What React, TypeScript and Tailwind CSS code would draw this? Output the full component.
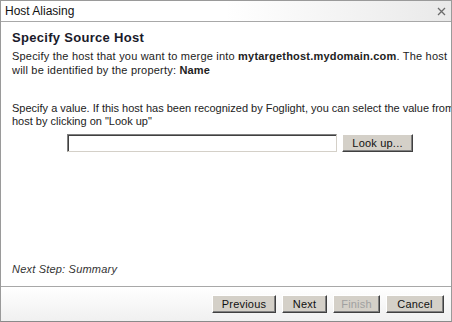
const App = () => {
    const font = { fontFamily: '"Liberation Sans", Arial, sans-serif' };
    return (
        <div className="w-[452px] h-[322px] bg-white overflow-hidden text-[11px] text-[#222]" style={font}>
            <div className="h-full flex flex-col border border-[#9a9a9a] border-b-[#8a8a8a]">
                {/* title bar */}
                <div className="h-[21px] flex items-center justify-between pl-[4px] pr-[5px] bg-gradient-to-r from-white via-white to-[#e9e9e9] border-b border-[#a8a8a8]">
                    <span className="text-[12px] text-[#111]">Host Aliasing</span>
                    <svg width="9" height="9" viewBox="0 0 9 9" className="mt-[1px]">
                        <path d="M1 1 L8 8 M8 1 L1 8" stroke="#6b6b6b" strokeWidth="1.3" />
                    </svg>
                </div>

                {/* body */}
                <div className="flex-1 flex flex-col pl-[11px] overflow-hidden">
                    <h2 className="mt-[8px] text-[13px] font-bold tracking-[0.3px] text-[#1a1a2a] leading-[16px]">Specify Source Host</h2>
                    <div className="mt-[3px] leading-[14px] whitespace-nowrap tracking-[0.2px]">
                        <p>
                            Specify the host that you want to merge into <b>mytargethost.mydomain.com</b>. The host
                        </p>
                        <p>
                            will be identified by the property: <b>Name</b>
                        </p>
                    </div>
                    <div className="mt-[25px] leading-[13px] whitespace-nowrap">
                        <p>Specify a value. If this host has been recognized by Foglight, you can select the value from</p>
                        <p>host by clicking on "Look up"</p>
                    </div>
                    <div className="mt-[6px] flex items-center pl-[55px] gap-[5px]">
                        <input
                            className="w-[270px] h-[18px] bg-white border border-[#808080] border-r-[#d4d0c8] border-b-[#d4d0c8] shadow-[inset_1px_1px_0_#404040] outline-none"
                            style={font}
                        />
                        <button className="w-[71px] h-[18px] bg-[#d4d0c8] text-[11px] tracking-[0.2px] text-[#111] border border-white border-r-[#404040] border-b-[#404040] shadow-[inset_-1px_-1px_0_#808080]">
                            Look up...
                        </button>
                    </div>
                    <div className="flex-1" />
                    <p className="mb-[9px] italic text-[#333] tracking-[0.2px]">Next Step: Summary</p>
                </div>

                {/* footer */}
                <div className="h-[35px] flex items-center justify-end gap-[6px] pr-[7px] border-t border-[#a8a8a8] bg-gradient-to-b from-white to-[#f0f0f0]">
                    {[
                        { label: "Previous", w: "w-[64px]", dis: false },
                        { label: "Next", w: "w-[45px]", dis: false },
                        { label: "Finish", w: "w-[47px]", dis: true },
                        { label: "Cancel", w: "w-[58px]", dis: false },
                    ].map((b) => (
                        <button
                            key={b.label}
                            className={`${b.w} h-[18px] bg-[#d4d0c8] text-[11px] tracking-[0.2px] border border-white border-r-[#404040] border-b-[#404040] shadow-[inset_-1px_-1px_0_#808080] ${b.dis ? "text-[#a0a0a0]" : "text-[#111]"}`}
                        >
                            {b.label}
                        </button>
                    ))}
                </div>
            </div>
        </div>
    );
};

export default App;
